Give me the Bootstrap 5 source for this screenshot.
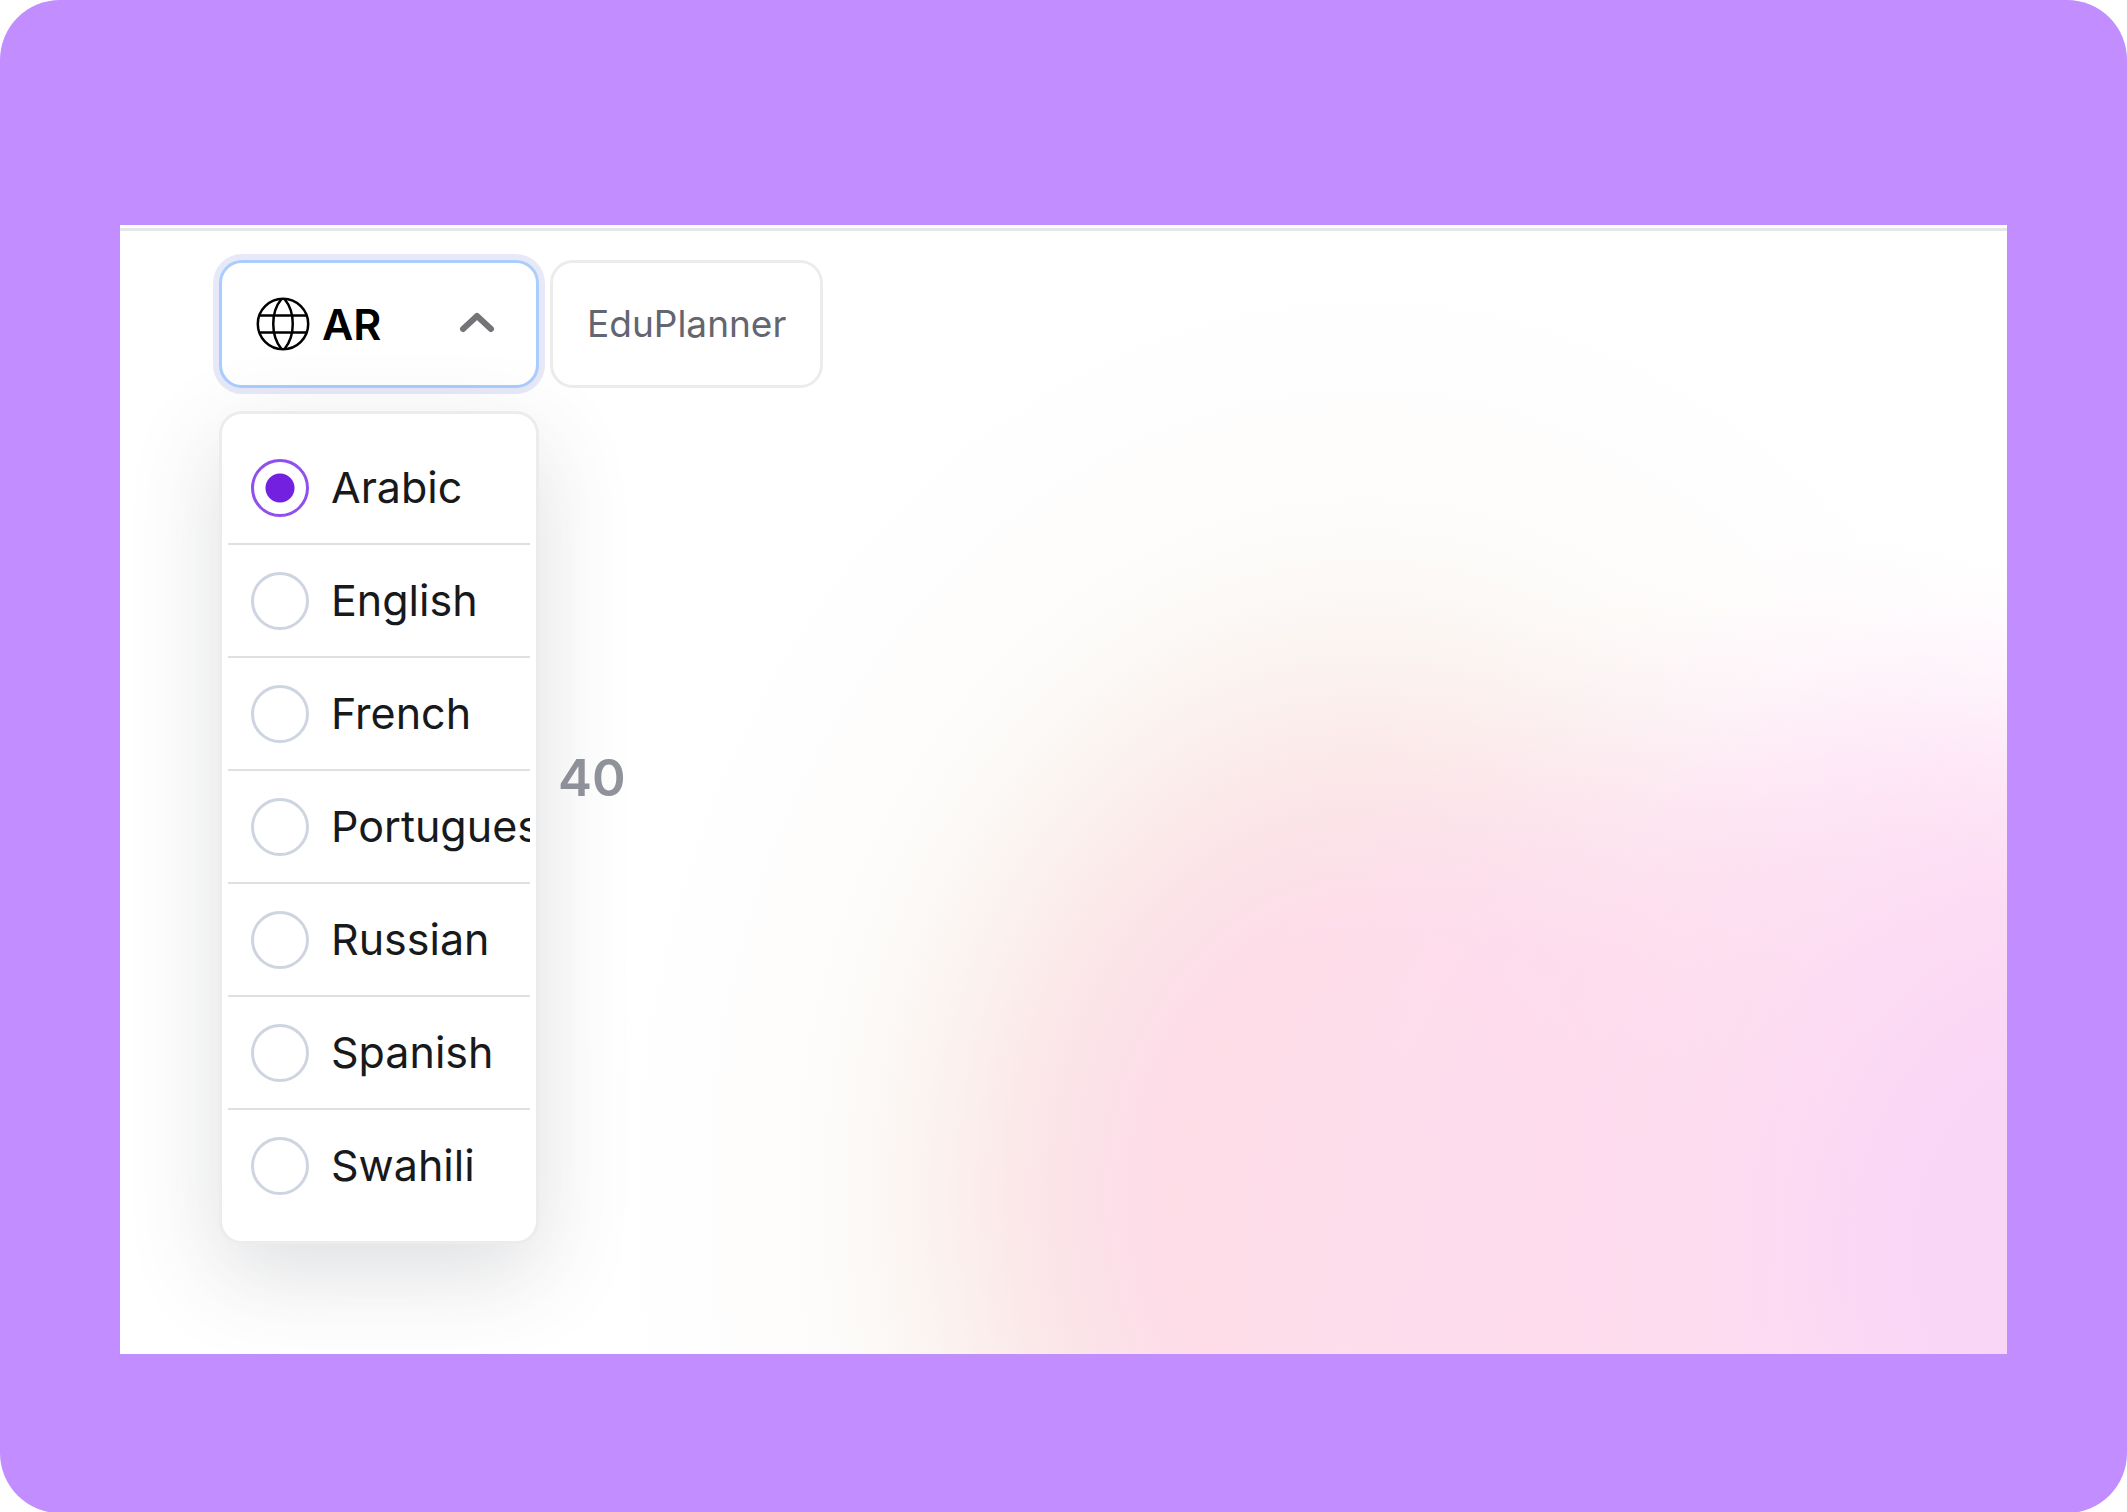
<!DOCTYPE html>
<html lang="en">
<head>
<meta charset="utf-8">
<meta name="viewport" content="width=device-width, initial-scale=1">
<title>EduPlanner</title>
<link href="https://cdn.jsdelivr.net/npm/bootstrap@5.3.0/dist/css/bootstrap.min.css" rel="stylesheet">
<style>
  body { font-family: Inter, "Liberation Sans", sans-serif; background: #fff; }
  .stage { min-height: 100vh; background: #c28dff; border-radius: 60px; padding: 225px 120px 159px; }
  .screen {
    padding-top: 3px;
    background:
      radial-gradient(ellipse 30% 60% at 104% 91%, rgba(249,212,246,1) 0%, rgba(249,212,246,.85) 32%, rgba(250,213,246,.58) 52%, rgba(251,214,246,.33) 67%, rgba(252,215,246,.14) 82%, rgba(253,220,246,0) 100%),
      radial-gradient(ellipse 38% 67% at 93% 95%, rgba(254,220,238,.8) 0%, rgba(254,220,238,.8) 45%, rgba(254,220,240,.7) 61%, rgba(254,220,242,.48) 72%, rgba(254,222,243,.24) 83%, rgba(254,224,244,.07) 93%, rgba(254,226,245,0) 100%),
      radial-gradient(ellipse 42% 86% at 66% 86%, #fddce6 0%, #fedde8 27%, #fbe2e8 37%, #fbe9ea 45%, #fbf0ee 52%, #fbf6f3 59%, #fdfbf9 67%, #fefdfc 76%, #fefefe 88%, #fff 100%);
  }
  .topline { height: 3px; background: #e2e8ea; }
  .toolbar { padding: 29px 100px 0 99px; gap: 11px; }
  .pill { height: 128px; border: 3px solid #ececec; border-radius: 23px; background: #fff; line-height: 56px; }
  .lang-btn { width: 320px; padding: 0 41px 0 34px; border-color: #a9cdff; box-shadow: 0 0 0 6px #e7e9f8; font-size: 43px; font-weight: 600; color: #000; }
  .app-btn { padding: 0 34px; font-size: 37px; color: #636570; }
  .lang-menu {
    top: 151px; left: 0; width: 320px; padding: 18px 6px; border: 3px solid #ececec; border-radius: 23px; background: #fff;
    box-shadow: 0 30px 90px rgba(60, 66, 80, .17);
  }
  .lang-item { height: 113px; padding-left: 23px; gap: 22px; border-bottom: 2px solid #dfe0e2; overflow: hidden; font-size: 43px; color: #18191b; white-space: nowrap; }
  .lang-item:last-child { border-bottom-color: transparent; }
  .lang-item .form-check-input { width: 58px; height: 58px; margin: 0; border: 3px solid #cfd5e0; background: #fff; }
  .lang-item .form-check-input:checked { border-color: #9050ee; background: radial-gradient(circle, #7420e0 14px, #fff 15px); }
  .score { padding: 358px 0 0 438px; height: 966px; font-size: 51px; font-weight: 600; line-height: 64px; color: #92949c; }
</style>
</head>
<body>
<div class="stage">
  <main class="screen">
    <div class="topline"></div>
    <div class="toolbar d-flex">
      <div class="position-relative">
        <button type="button" class="pill lang-btn d-flex align-items-center" aria-expanded="true" aria-controls="languages">
          <svg width="54" height="54" viewBox="0 0 54 54" fill="none" stroke="#000" stroke-width="2.5" aria-hidden="true"><circle cx="27" cy="27" r="25.2"/><path d="M25.500 2C14.500 15 14.500 39 25.500 52M28.500 2C39.500 15 39.500 39 28.500 52M3 18.500H51M3 35.500H51"/></svg>
          <span class="ms-2 ps-1 me-auto">AR</span>
          <svg width="36" height="24" viewBox="0 0 36 24" fill="none" stroke="#737477" stroke-width="6" stroke-linecap="round" stroke-linejoin="round" aria-hidden="true"><path d="M4 17L18 4L32 17"/></svg>
        </button>
        <div id="languages" class="lang-menu position-absolute z-3">
          <label class="lang-item d-flex align-items-center"><input class="form-check-input flex-shrink-0" type="radio" name="language" checked>Arabic</label>
          <label class="lang-item d-flex align-items-center"><input class="form-check-input flex-shrink-0" type="radio" name="language">English</label>
          <label class="lang-item d-flex align-items-center"><input class="form-check-input flex-shrink-0" type="radio" name="language">French</label>
          <label class="lang-item d-flex align-items-center"><input class="form-check-input flex-shrink-0" type="radio" name="language">Portuguese</label>
          <label class="lang-item d-flex align-items-center"><input class="form-check-input flex-shrink-0" type="radio" name="language">Russian</label>
          <label class="lang-item d-flex align-items-center"><input class="form-check-input flex-shrink-0" type="radio" name="language">Spanish</label>
          <label class="lang-item d-flex align-items-center"><input class="form-check-input flex-shrink-0" type="radio" name="language">Swahili</label>
        </div>
      </div>
      <button type="button" class="pill app-btn">EduPlanner</button>
    </div>
    <div class="score">40</div>
  </main>
</div>
<script src="https://cdn.jsdelivr.net/npm/bootstrap@5.3.0/dist/js/bootstrap.bundle.min.js"></script>
</body>
</html>
